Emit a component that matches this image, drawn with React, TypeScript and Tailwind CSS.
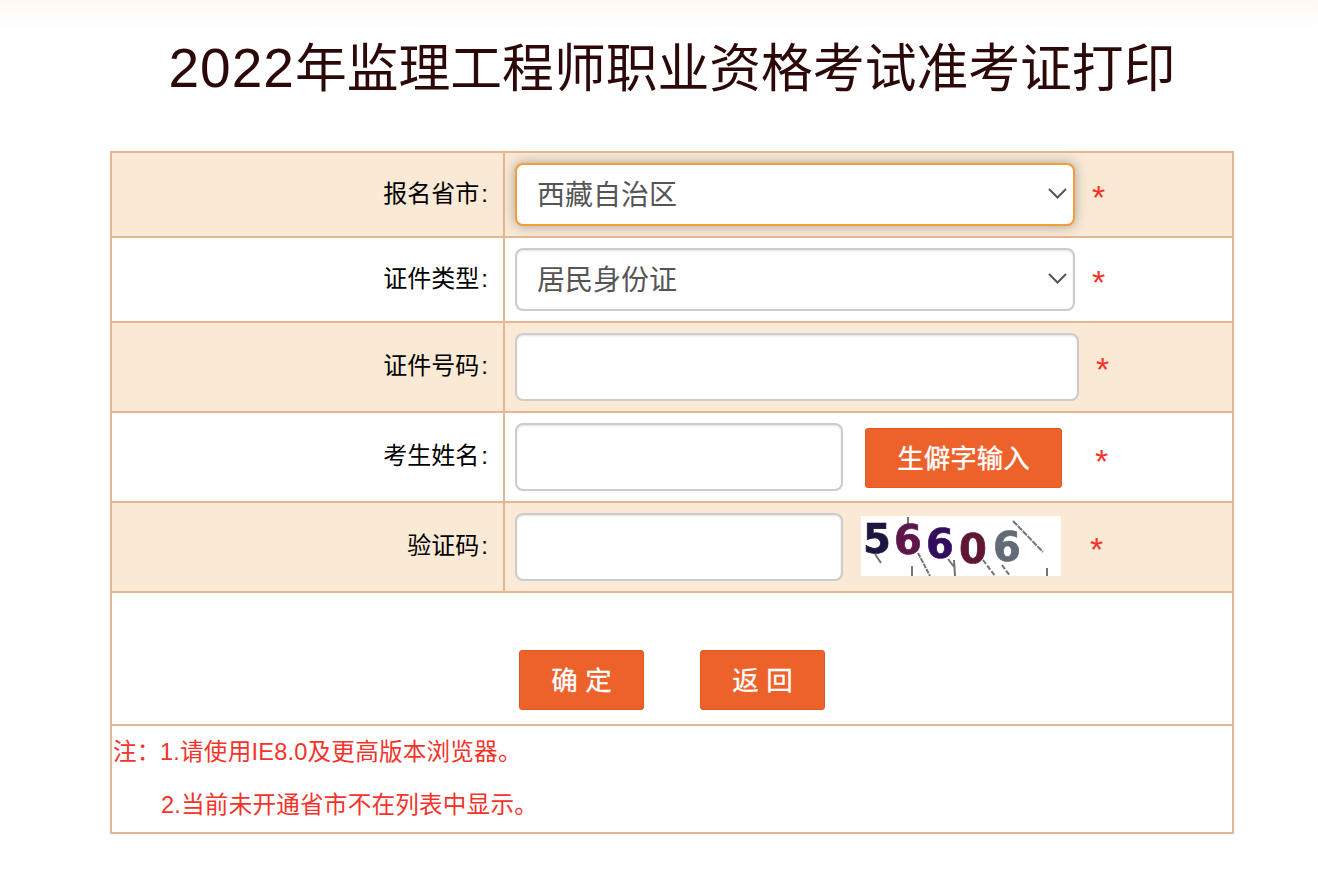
import React from 'react';

const rowLine = 'border-b-2 border-[#e4b694]';
const cjk = "font-['Liberation_Sans','Noto_Sans_CJK_SC',sans-serif]";

function Label({ text, pt }: { text: string; pt: string }) {
    return (
        <div className={`w-[393px] shrink-0 border-r-2 border-[#e4b694] flex justify-end pr-[15px] text-[24px] leading-[34px] text-black ${pt}`}>
            <span>{text}</span>
            <span className="ml-[2px]">:</span>
        </div>
    );
}

function Star({ className }: { className: string }) {
    return <span className={`text-[#f5332a] text-[34px] leading-[36px] ${className}`}>*</span>;
}

function Chevron() {
    return (
        <svg className="absolute right-[7px] top-[24px]" width="20" height="14" viewBox="0 0 20 14" fill="none">
            <path d="M1 2 L9.5 10.5 L18 2" stroke="#555" strokeWidth="2" />
        </svg>
    );
}

function Captcha() {
    return (
        <svg className="shrink-0" width="200" height="60" viewBox="0 0 200 60">
            <defs>
                <filter id="soft">
                    <feGaussianBlur stdDeviation="0.6" />
                </filter>
            </defs>
            <rect width="200" height="60" fill="#fff" />
            <g stroke="#6f7771" strokeWidth="2" fill="none" filter="url(#soft)">
                <path d="M152 5 L182 36" strokeDasharray="6 1" />
                <path d="M47 1 L47 9" />
                <path d="M14 38 L20 47" />
                <path d="M57 37 L69 60" strokeDasharray="5 1" />
                <path d="M51 50 L51 60" />
                <path d="M93 44 L94 60 M87 43 L94 52" />
                <path d="M122 44 L134 60" strokeDasharray="5 2" />
                <path d="M141 49 L149 60" strokeDasharray="5 2" />
                <path d="M186 52 L186 60" />
            </g>
            <g fontFamily="'DejaVu Sans', sans-serif" fontWeight="700" fontSize="40" strokeWidth="0.7" filter="url(#soft)">
                <text x="2" y="37" fill="#1a1740" stroke="#1a1740">5</text>
                <text x="33" y="38" fill="#5c1748" stroke="#5c1748">6</text>
                <text x="65" y="42" fill="#33105f" stroke="#33105f">6</text>
                <text x="98" y="47" fill="#5f1535" stroke="#5f1535">0</text>
                <text x="132" y="45" fill="#626b78" stroke="#626b78">6</text>
            </g>
        </svg>
    );
}

const fieldBase = 'bg-white rounded-[8px] border-2 border-[#cccccc] shadow-[inset_0_1px_2px_rgba(0,0,0,0.12)] outline-none';
const selectBase = 'w-[560px] h-[63px] pl-[20px] pr-[40px] pt-[2px] text-[28px] text-[#555555] appearance-none';
const orangeBtn = 'bg-[#ed622b] text-white rounded-[3px] border border-[#e0591f] font-normal [-webkit-text-stroke:0.3px_white]';

export default function App() {
    return (
        <div className={`relative min-h-[878px] bg-gradient-to-b from-[#fff8f2] to-white to-[30px] ${cjk}`}>
            <div className="ml-[110px] w-[1124px]">
                <h1 className="h-[151px] pt-[32px] text-center text-[51.8px] leading-[72px] text-[#2c0808] font-normal whitespace-nowrap">
                    <span className="text-[55px] tracking-[1px]">2022</span>年监理工程师职业资格考试准考证打印
                </h1>

                <div className="border-x-2 border-t-2 border-[#e4b694]">
                    <div className={`${rowLine} flex h-[85px] bg-[#f9e9d5]`}>
                        <Label text="报名省市" pt="pt-[24px]" />
                        <div className="flex pl-[10px] pt-[10px]">
                            <div className="relative">
                                <select
                                    defaultValue="西藏自治区"
                                    className={`${selectBase} bg-white rounded-[8px] border-2 border-[#f29d38] shadow-[0_0_12px_rgba(80,90,100,0.5)] outline-none`}
                                >
                                    <option>西藏自治区</option>
                                </select>
                                <Chevron />
                            </div>
                            <Star className="ml-[17px] pt-[16px]" />
                        </div>
                    </div>

                    <div className={`${rowLine} flex h-[85px] bg-white`}>
                        <Label text="证件类型" pt="pt-[24px]" />
                        <div className="flex pl-[10px] pt-[10px]">
                            <div className="relative">
                                <select defaultValue="居民身份证" className={`${selectBase} ${fieldBase}`}>
                                    <option>居民身份证</option>
                                </select>
                                <Chevron />
                            </div>
                            <Star className="ml-[17px] pt-[16px]" />
                        </div>
                    </div>

                    <div className={`${rowLine} flex h-[90px] bg-[#f9e9d5]`}>
                        <Label text="证件号码" pt="pt-[26px]" />
                        <div className="flex pl-[10px] pt-[10px]">
                            <input className={`${fieldBase} w-[564px] h-[68px]`} />
                            <Star className="ml-[17px] pt-[18px]" />
                        </div>
                    </div>

                    <div className={`${rowLine} flex h-[90px] bg-white`}>
                        <Label text="考生姓名" pt="pt-[26px]" />
                        <div className="flex pl-[10px] pt-[10px]">
                            <input className={`${fieldBase} w-[328px] h-[68px]`} />
                            <button className={`${orangeBtn} ml-[22px] mt-[5px] w-[197px] h-[60px] pt-[4px] text-[26.5px]`}>生僻字输入</button>
                            <Star className="ml-[33px] pt-[20px]" />
                        </div>
                    </div>

                    <div className={`${rowLine} flex h-[90px] bg-[#f9e9d5]`}>
                        <Label text="验证码" pt="pt-[26px]" />
                        <div className="flex pl-[10px] pt-[10px]">
                            <input className={`${fieldBase} w-[328px] h-[68px]`} />
                            <div className="ml-[18px] mt-[3px]">
                                <Captcha />
                            </div>
                            <Star className="ml-[29px] pt-[18px]" />
                        </div>
                    </div>

                    <div className={`${rowLine} flex h-[133px] bg-white pl-[407px] pt-[57px] gap-[56px]`}>
                        <button className={`${orangeBtn} w-[125px] h-[60px] pt-[3px] text-[26.5px]`}>确 定</button>
                        <button className={`${orangeBtn} w-[125px] h-[60px] pt-[3px] text-[26.5px]`}>返 回</button>
                    </div>

                    <div className={`${rowLine} h-[108px] bg-white text-[23.6px] tracking-[0.2px] text-[#f5332a]`}>
                        <div className="flex h-[54px] items-center pl-[1px]">
                            <span className="w-[47px] shrink-0">注：</span>
                            <span>1.请使用IE8.0及更高版本浏览器。</span>
                        </div>
                        <div className="flex h-[52px] items-center pl-[49px]">
                            <span>2.当前未开通省市不在列表中显示。</span>
                        </div>
                    </div>
                </div>
            </div>
        </div>
    );
}
